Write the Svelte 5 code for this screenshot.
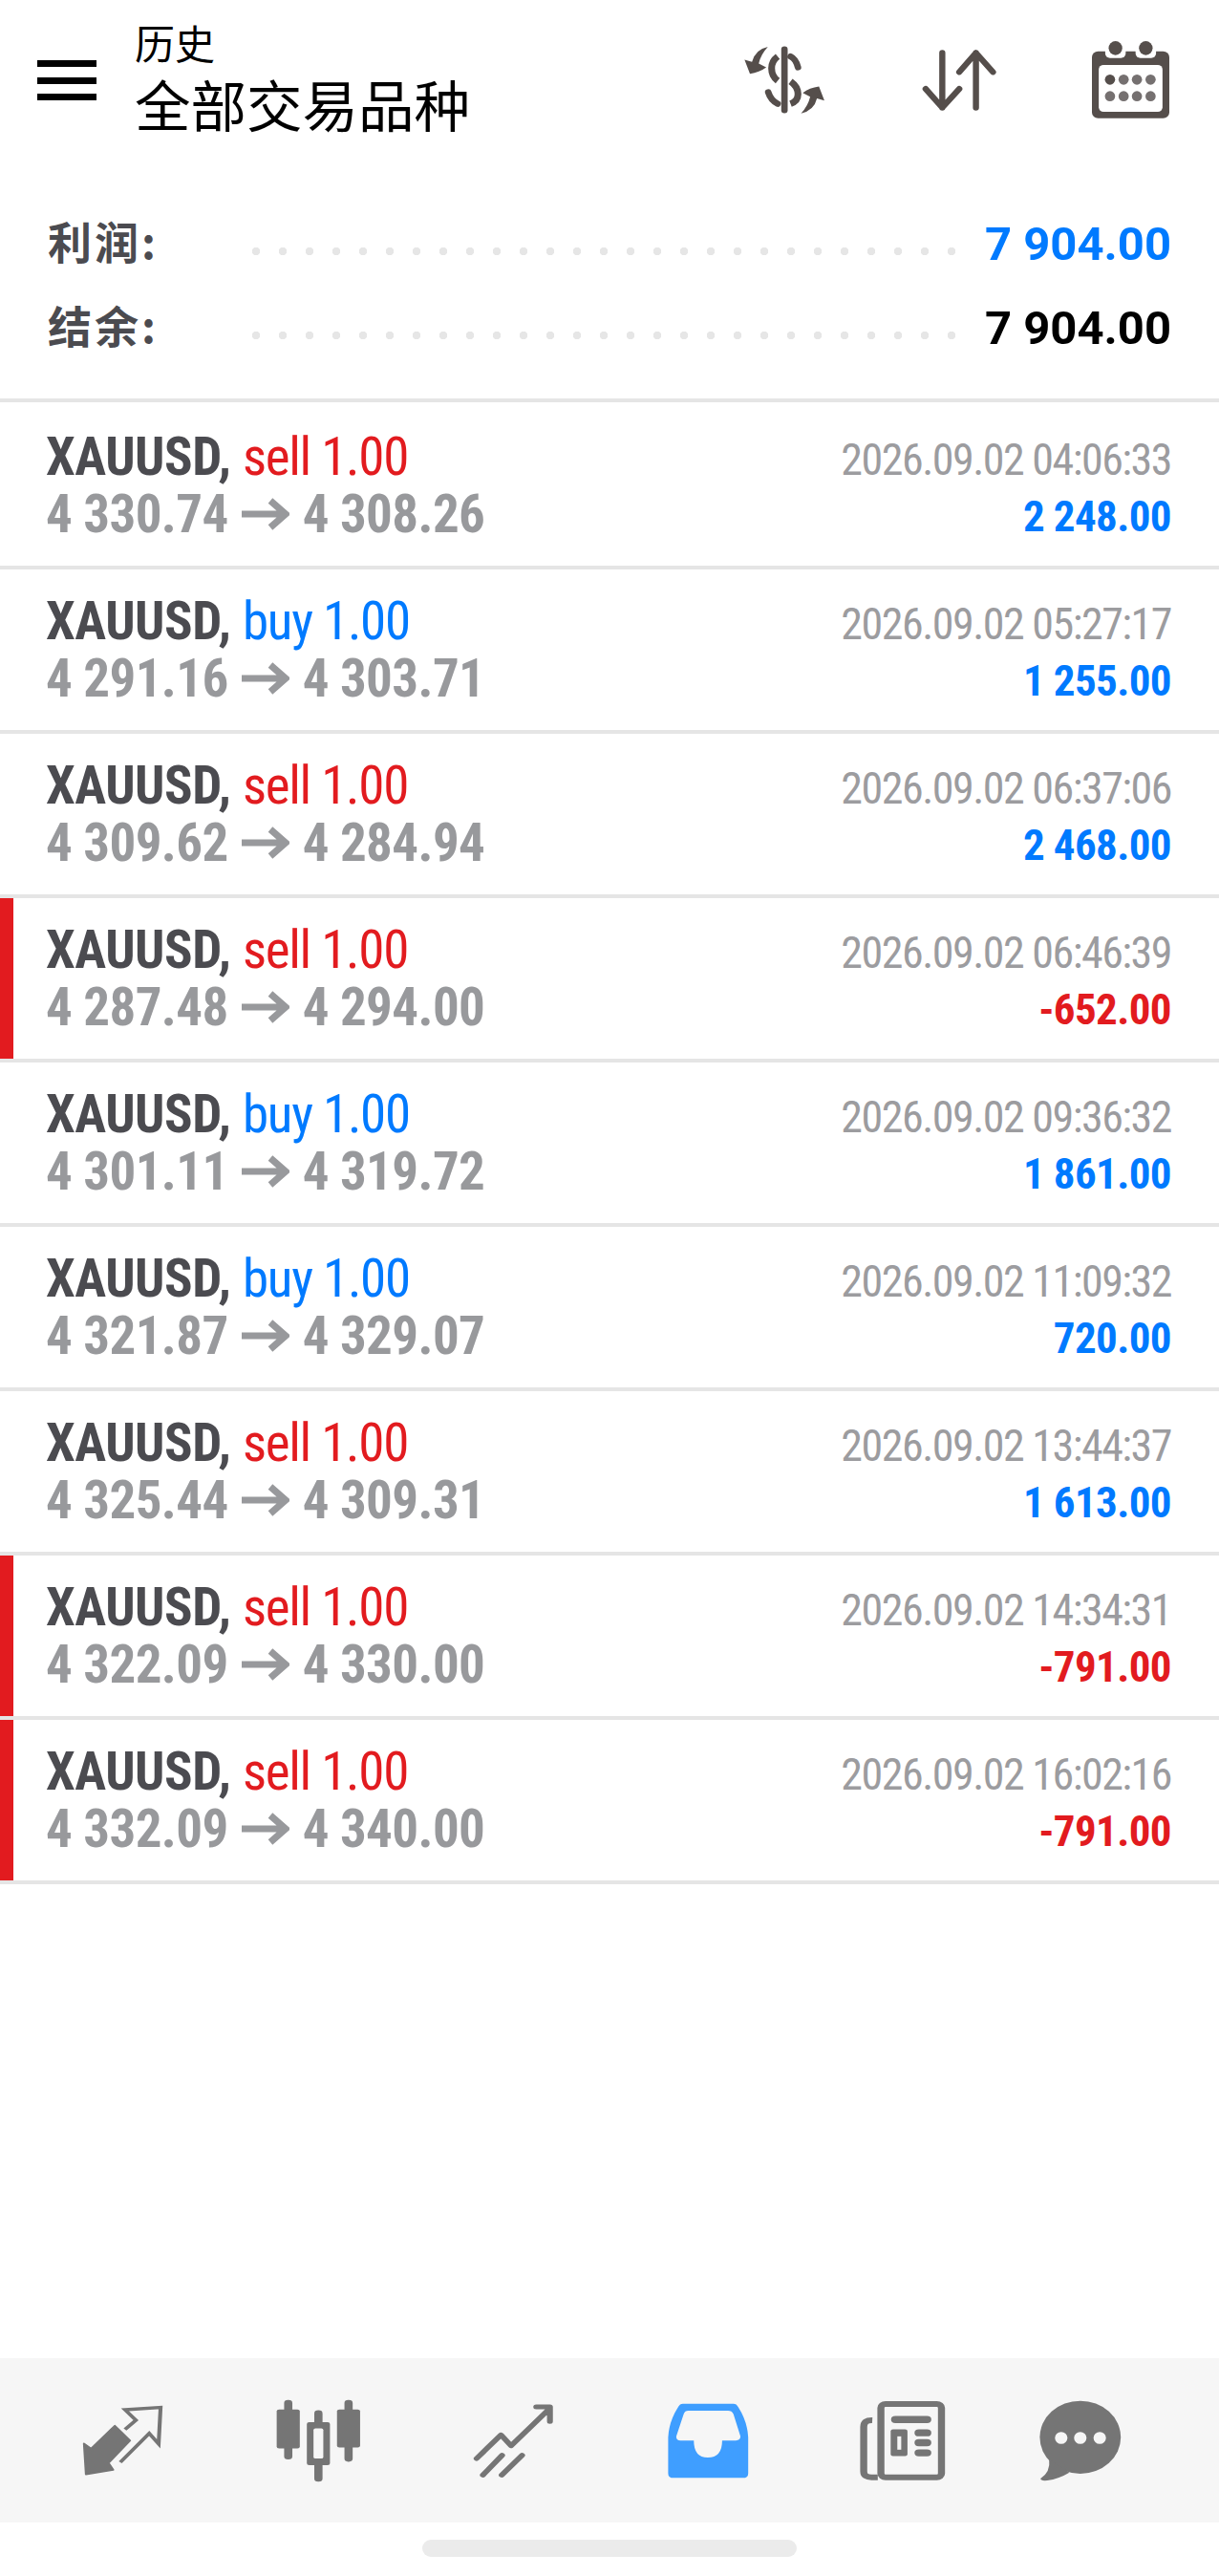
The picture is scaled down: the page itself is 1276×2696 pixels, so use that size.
<script lang="ts">
    const rows = [
        { side: "sell", open: "4 330.74", close: "4 308.26", time: "2026.09.02 04:06:33", profit: "2 248.00" },
        { side: "buy", open: "4 291.16", close: "4 303.71", time: "2026.09.02 05:27:17", profit: "1 255.00" },
        { side: "sell", open: "4 309.62", close: "4 284.94", time: "2026.09.02 06:37:06", profit: "2 468.00" },
        { side: "sell", open: "4 287.48", close: "4 294.00", time: "2026.09.02 06:46:39", profit: "-652.00" },
        { side: "buy", open: "4 301.11", close: "4 319.72", time: "2026.09.02 09:36:32", profit: "1 861.00" },
        { side: "buy", open: "4 321.87", close: "4 329.07", time: "2026.09.02 11:09:32", profit: "720.00" },
        { side: "sell", open: "4 325.44", close: "4 309.31", time: "2026.09.02 13:44:37", profit: "1 613.00" },
        { side: "sell", open: "4 322.09", close: "4 330.00", time: "2026.09.02 14:34:31", profit: "-791.00" },
        { side: "sell", open: "4 332.09", close: "4 340.00", time: "2026.09.02 16:02:16", profit: "-791.00" },
    ];
</script>

<div class="page">
    <header class="top">
        <div class="burger"><span></span><span></span><span></span></div>
        <div class="titles">
            <div class="sub">历史</div>
            <div class="title">全部交易品种</div>
        </div>
        <div class="actions">
            <svg class="ic-dollar" viewBox="165 145 240 215" preserveAspectRatio="none">
                <g fill="none" stroke="#554e4b" stroke-linecap="round">
                    <path d="M284 156V346" stroke-width="19" />
                    <path d="M264 178Q246 192 246 215Q246 240 264 254" stroke-width="20" stroke-linecap="butt" />
                    <path d="M302 178Q318 186 324 212" stroke-width="19" />
                    <path d="M302 256Q324 272 324 296Q324 318 302 326" stroke-width="20" stroke-linecap="butt" />
                    <path d="M236 290Q244 316 264 326" stroke-width="19" />
                </g>
                <path fill="#554e4b" d="M235 148Q198 156 188 195L166 188L182 232Q210 228 230 212L208 200Q214 172 235 148Z" />
                <path fill="#554e4b" d="M333 356Q372 346 380 309L402 316L386 272Q358 276 338 292L360 304Q354 332 333 356Z" />
            </svg>
            <svg class="ic-sort" viewBox="688 155 222 195" preserveAspectRatio="none">
                <path fill="none" stroke="#554e4b" stroke-width="18" stroke-linecap="round" stroke-linejoin="round" d="M748 165V337M699 278L748 337L798 278M847 337V165M798 225L847 165L897 225" />
            </svg>
            <svg class="ic-cal" viewBox="1193 125 227 243" preserveAspectRatio="none">
                <rect x="1193" y="157" width="227" height="210" rx="18" fill="#554e4b" />
                <rect x="1232" y="140" width="60" height="38" rx="14" fill="#fff" />
                <rect x="1321" y="140" width="60" height="38" rx="14" fill="#fff" />
                <rect x="1232" y="125" width="60" height="32" fill="#fff" />
                <rect x="1321" y="125" width="60" height="32" fill="#fff" />
                <ellipse cx="1262" cy="147" rx="20" ry="22" fill="#554e4b" />
                <ellipse cx="1351" cy="147" rx="20" ry="22" fill="#554e4b" />
                <rect x="1213" y="200" width="187" height="147" rx="14" fill="#fff" />
                <g fill="#757070">
                    <ellipse cx="1246" cy="246" rx="15" ry="16" fill="#554e4b" />
                    <ellipse cx="1286" cy="246" rx="15" ry="16" />
                    <ellipse cx="1325" cy="246" rx="15" ry="16" />
                    <ellipse cx="1365" cy="246" rx="15" ry="16" />
                    <ellipse cx="1246" cy="298" rx="15" ry="16" />
                    <ellipse cx="1286" cy="298" rx="15" ry="16" />
                    <ellipse cx="1325" cy="298" rx="15" ry="16" />
                    <ellipse cx="1365" cy="298" rx="15" ry="16" />
                </g>
            </svg>
        </div>
    </header>

    <section class="summary">
        <div class="line">
            <span class="label">利润:</span>
            <span class="dots"></span>
            <span class="value blue">7 904.00</span>
        </div>
        <div class="line">
            <span class="label">结余:</span>
            <span class="dots"></span>
            <span class="value">7 904.00</span>
        </div>
    </section>

    <ul class="list">
        {#each rows as r}
            <li class="row" class:loss={r.profit.startsWith("-")}>
                <div class="left">
                    <div class="head">
                        <b>XAUUSD,</b>
                        <span class={r.side}>{r.side} 1.00</span>
                    </div>
                    <div class="prices">
                        {r.open}
                        <svg class="arrow" viewBox="0 0 50 34"><path d="M0 17H46M30 3L46 17L30 31" fill="none" stroke="#98999c" stroke-width="7" /></svg>
                        {r.close}
                    </div>
                </div>
                <div class="right">
                    <div class="time">{r.time}</div>
                    <div class="profit">{r.profit}</div>
                </div>
            </li>
        {/each}
    </ul>

    <div class="spacer"></div>

    <nav class="tabs">
        <svg class="t1" viewBox="210 230 215 228" preserveAspectRatio="none">
            <path fill="#757575" stroke="#757575" stroke-width="5" stroke-linejoin="round" d="M296 298L335 345L280 415L292 437L222 451L217 354L235 370Z" />
            <path fill="none" stroke="#757575" stroke-width="10" d="M322 310L350 281L322 248L413 241L408 355L384 322L310 413" />
        </svg>
        <svg class="t2" viewBox="704 208 222 262" preserveAspectRatio="none">
            <g fill="#757575">
                <rect x="727" y="210" width="21" height="188" rx="10" />
                <rect x="708" y="240" width="59" height="123" rx="6" />
                <rect x="881" y="210" width="21" height="195" rx="10" />
                <rect x="862" y="240" width="59" height="120" rx="6" />
                <rect x="804" y="243" width="21" height="225" rx="10" />
                <rect x="785" y="280" width="59" height="136" rx="6" />
            </g>
            <rect x="802" y="300" width="25" height="95" rx="5" fill="#f6f6f6" />
        </svg>
        <svg class="t3" viewBox="1208 215 212 240" preserveAspectRatio="none">
            <path fill="none" stroke="#757575" stroke-width="15" stroke-linecap="round" stroke-linejoin="round" d="M1220 392L1282 318L1308 352L1404 238M1372 230H1407V276M1236 444L1285 382M1284 444L1336 382" />
        </svg>
        <svg class="t4" viewBox="145 218 209 236" preserveAspectRatio="none">
            <path fill="#3f9eff" d="M184 220H314Q322 220 326 230Q350 275 352 325V438Q352 452 338 452H160Q146 452 146 438V325Q148 275 172 230Q176 220 184 220Z" />
            <path fill="#f6f6f6" d="M198 242H300Q310 242 314 252L332 322Q332 335 320 335H285Q285 388 248 388Q212 388 212 335H178Q166 335 167 322L186 252Q189 242 198 242Z" />
        </svg>
        <svg class="t5" viewBox="644 208 220 256" preserveAspectRatio="none">
            <g fill="none" stroke="#757575">
                <rect x="698" y="220" width="155" height="231" rx="12" stroke-width="18" />
                <path stroke-width="18" d="M676 271Q654 270 654 292V432Q654 452 676 451H690" />
                <path stroke-width="22" stroke-linecap="round" d="M735 269H816M795 311H816M795 342H816M795 374H816" />
            </g>
            <rect x="723" y="300" width="43" height="84" rx="6" fill="#757575" />
            <rect x="740" y="322" width="10" height="42" fill="#f6f6f6" />
        </svg>
        <svg class="t6" viewBox="1105 208 211 256" preserveAspectRatio="none">
            <ellipse cx="1210" cy="325" rx="104" ry="115" fill="#757575" />
            <path fill="#757575" d="M1130 395Q1134 435 1108 455Q1108 463 1125 461Q1155 456 1182 436Z" />
            <g fill="#f6f6f6">
                <ellipse cx="1161" cy="327" rx="16" ry="19" />
                <ellipse cx="1210" cy="327" rx="16" ry="19" />
                <ellipse cx="1260" cy="327" rx="16" ry="19" />
            </g>
        </svg>
    </nav>
    <div class="home"><span></span></div>
</div>

<style>
    :global(body) {
        margin: 0;
        background: #fff;
    }

    .page {
        width: 1276px;
        height: 2696px;
        display: flex;
        flex-direction: column;
        font-family: Roboto, "Noto Sans CJK SC", sans-serif;
    }

    .top {
        height: 180px;
        display: flex;
        padding: 20px 52px 0 39px;
        box-sizing: border-box;
    }

    .burger {
        width: 62px;
        height: 42px;
        margin-top: 43px;
        display: flex;
        flex-direction: column;
        justify-content: space-between;
    }

    .burger span {
        height: 7px;
        background: #000;
    }

    .titles {
        margin-left: 40px;
        font-family: "Noto Sans CJK SC", sans-serif;
        color: #000;
    }

    .sub {
        font-size: 42px;
        line-height: 48px;
    }

    .title {
        font-size: 58.5px;
        line-height: 80px;
    }

    .actions {
        margin-left: auto;
        display: flex;
        align-items: flex-start;
    }

    .ic-dollar {
        width: 85px;
        height: 72px;
        margin-top: 28px;
    }

    .ic-sort {
        width: 79px;
        height: 65px;
        margin: 32px 0 0 101px;
    }

    .ic-cal {
        width: 81px;
        height: 81px;
        margin: 23px 0 0 99px;
    }

    .summary {
        height: 237px;
        padding: 30px 50px 0;
        box-sizing: border-box;
    }

    .line {
        height: 88px;
        display: flex;
        align-items: center;
    }

    .label {
        width: 214px;
        margin-top: -6px;
        font: 700 46px "Noto Sans CJK SC", sans-serif;
        letter-spacing: 3px;
        color: #4b4b50;
    }

    .dots {
        width: 740px;
        height: 8px;
        margin-top: 18px;
        background: radial-gradient(circle at 4px 4px, #e6e6e6 4px, transparent 4.5px) 0 0 / 28px 8px repeat-x;
    }

    .value {
        margin-left: auto;
        margin-top: 2px;
        font-size: 49px;
        font-weight: 700;
        color: #000;
    }

    .blue {
        color: #007aff;
    }

    .list {
        list-style: none;
        margin: 0;
        padding: 0;
        border-top: 4px solid #e5e5e5;
    }

    .row {
        position: relative;
        border-bottom: 4px solid #e5e5e5;
        padding: 27px 50px 0;
        height: 141px;
        display: flex;
        justify-content: space-between;
    }

    .row:first-child {
        padding-top: 30px;
    }

    .loss::before {
        content: "";
        position: absolute;
        left: 0;
        top: 0;
        bottom: 0;
        width: 14px;
        background: #e21b1f;
    }

    .left {
        margin: -3px 0 0 -2px;
        font-stretch: 75%;
    }

    .head {
        font-size: 55px;
        line-height: 60px;
    }

    .head b {
        letter-spacing: -0.5px;
        color: #4b4b50;
    }

    .sell,
    .buy {
        letter-spacing: -1.3px;
    }

    .sell {
        color: #e21b1f;
    }

    .buy {
        color: #007aff;
    }

    .prices {
        font-size: 55px;
        line-height: 60px;
        font-weight: 700;
        letter-spacing: -0.6px;
        color: #98999c;
        display: flex;
        gap: 14px;
        align-items: center;
    }

    .arrow {
        width: 50px;
        height: 34px;
    }

    .right {
        text-align: right;
        font-stretch: 75%;
    }

    .time {
        font-size: 46px;
        line-height: 60px;
        letter-spacing: -1.5px;
        color: #9c9c9f;
    }

    .profit {
        font-size: 45px;
        line-height: 60px;
        font-weight: 700;
        letter-spacing: -0.6px;
        color: #007aff;
    }

    .loss .profit {
        color: #e21b1f;
    }

    .spacer {
        flex: 1;
    }

    .tabs {
        height: 172px;
        background: #f6f6f6;
        display: grid;
        grid-template-columns: repeat(5, 204px) 168px;
        padding-left: 27px;
        align-items: center;
        justify-items: center;
    }

    .t1 { width: 88px; height: 76px; }
    .t2 { width: 91px; height: 87px; }
    .t3 { width: 87px; height: 80px; }
    .t4 { width: 85px; height: 79px; }
    .t5 { width: 90px; height: 85px; }
    .t6 { width: 86px; height: 85px; }

    .home {
        height: 56px;
        display: flex;
        justify-content: center;
        padding-top: 18px;
        box-sizing: border-box;
    }

    .home span {
        width: 392px;
        height: 18px;
        border-radius: 9px;
        background: #ebebeb;
    }
</style>
